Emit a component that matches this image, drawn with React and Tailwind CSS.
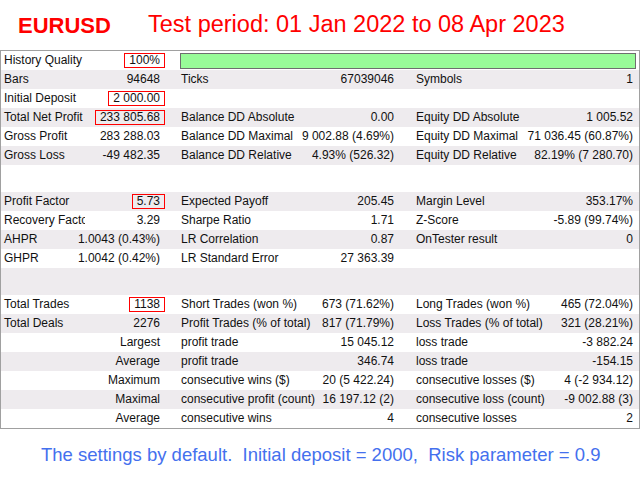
const ROWS = [
  { quality: true, l1: "History Quality", v1: "100%", box: true },
  { l1: "Bars", v1: "94648", l2: "Ticks", v2: "67039046", l3: "Symbols", v3: "1" },
  { l1: "Initial Deposit", v1: "2 000.00", box: true },
  { l1: "Total Net Profit", v1: "233 805.68", box: true, l2: "Balance DD Absolute", v2: "0.00", l3: "Equity DD Absolute", v3: "1 005.52" },
  { l1: "Gross Profit", v1: "283 288.03", l2: "Balance DD Maximal", v2: "9 002.88 (4.69%)", l3: "Equity DD Maximal", v3: "71 036.45 (60.87%)" },
  { l1: "Gross Loss", v1: "-49 482.35", l2: "Balance DD Relative", v2: "4.93% (526.32)", l3: "Equity DD Relative", v3: "82.19% (7 280.70)" },
  { spacer: true },
  { l1: "Profit Factor", v1: "5.73", box: true, l2: "Expected Payoff", v2: "205.45", l3: "Margin Level", v3: "353.17%" },
  { l1: "Recovery Factor", v1: "3.29", l2: "Sharpe Ratio", v2: "1.71", l3: "Z-Score", v3: "-5.89 (99.74%)" },
  { l1: "AHPR", v1: "1.0043 (0.43%)", l2: "LR Correlation", v2: "0.87", l3: "OnTester result", v3: "0" },
  { l1: "GHPR", v1: "1.0042 (0.42%)", l2: "LR Standard Error", v2: "27 363.39" },
  { spacer: true },
  { l1: "Total Trades", v1: "1138", box: true, l2: "Short Trades (won %)", v2: "673 (71.62%)", l3: "Long Trades (won %)", v3: "465 (72.04%)" },
  { l1: "Total Deals", v1: "2276", l2: "Profit Trades (% of total)", v2: "817 (71.79%)", l3: "Loss Trades (% of total)", v3: "321 (28.21%)" },
  { v1: "Largest", l2: "profit trade", v2: "15 045.12", l3: "loss trade", v3: "-3 882.24" },
  { v1: "Average", l2: "profit trade", v2: "346.74", l3: "loss trade", v3: "-154.15" },
  { v1: "Maximum", l2: "consecutive wins ($)", v2: "20 (5 422.24)", l3: "consecutive losses ($)", v3: "4 (-2 934.12)" },
  { v1: "Maximal", l2: "consecutive profit (count)", v2: "16 197.12 (2)", l3: "consecutive loss (count)", v3: "-9 002.88 (3)" },
  { v1: "Average", l2: "consecutive wins", v2: "4", l3: "consecutive losses", v3: "2" }
];

export default function App() {
  return (
    <div className="w-[640px] h-[480px] bg-white overflow-hidden" style={{ fontFamily: '"Liberation Sans", Arial, sans-serif' }}>
      <div className="h-[50px] flex items-center pl-[18px] text-[#ff0000]">
        <span className="w-[130px] text-[22px] font-bold">EURUSD</span>
        <span className="text-[23.5px]">Test period: 01 Jan 2022 to 08 Apr 2023</span>
      </div>

      <div className="w-[640px] border border-[#a0a0a0] text-[12px] text-[#111]">
        {ROWS.map((r, i) => (
          <StatRow key={i} r={r} grey={i % 2 === 1} />
        ))}
      </div>

      <div className="h-[51px] flex items-center pl-[41px] text-[18.5px] text-[#4470ee] whitespace-pre">
        The settings by default.  Initial deposit = 2000,  Risk parameter = 0.9
      </div>
    </div>
  );
}

function StatRow({ r, grey }) {
  const bg = grey ? "bg-[#eeebee]" : "bg-white";
  if (r.spacer) return <div className={`h-[27px] ${bg}`} />;

  // the first label is clipped where the value column begins, as in the report
  return (
    <div className={`flex h-[19px] leading-[19px] whitespace-nowrap ${bg}`}>
      <div className="w-[84px] pl-[3px] overflow-hidden">{r.l1}</div>
      <div className="w-[80px] flex justify-end">
        {r.box ? (
          <span className="self-start mt-[2px] h-[15px] leading-[13px] px-[4px] border border-[#ff0000]">{r.v1}</span>
        ) : (
          <span className="pr-[5px]">{r.v1}</span>
        )}
      </div>
      {r.quality ? (
        <div className="w-[474px] pl-[15px] pr-[3px] pt-[2px]">
          <div className="h-[16px] bg-[#98fb98] border border-[#6e6e6e]" />
        </div>
      ) : (
        <>
          <div className="w-[234px] flex justify-between pl-[16px] pr-[5px]">
            <span>{r.l2}</span>
            <span>{r.v2}</span>
          </div>
          <div className="w-[240px] flex justify-between pl-[17px] pr-[6px]">
            <span>{r.l3}</span>
            <span>{r.v3}</span>
          </div>
        </>
      )}
    </div>
  );
}
